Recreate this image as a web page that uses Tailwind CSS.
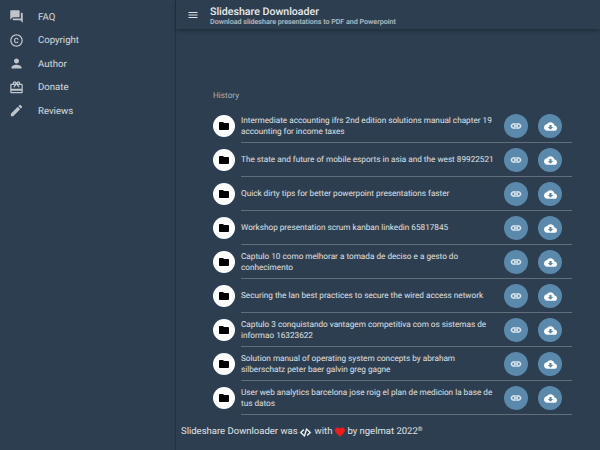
<!DOCTYPE html>
<html lang="en">
<head>
    <meta charset="UTF-8">
    <title>Slideshare Downloader</title>
    <script src="https://cdn.jsdelivr.net/npm/@tailwindcss/browser@4"></script>
</head>
<body class="bg-[#2c3e50] text-white/85 font-['Roboto',sans-serif] [text-rendering:geometricPrecision] h-[450px] w-[600px] overflow-hidden">

<div class="flex h-[450px]">
    <!-- drawer -->
    <aside class="w-[176px] shrink-0 h-full border-r border-black/20 text-[9.6px] text-white/80">
        <nav id="menu" class="flex flex-col pt-[5px]">
            <a class="flex items-center h-[23.5px] pl-[9px]"><svg class="w-[15px] h-[15px] fill-white/70 mr-[14px]" viewBox="0 0 24 24"><path d="M21 6h-2v9H6v2c0 .55.45 1 1 1h11l4 4V7c0-.55-.45-1-1-1zm-4 6V3c0-.55-.45-1-1-1H3c-.55 0-1 .45-1 1v14l4-4h10c.55 0 1-.45 1-1z"/></svg><span class="pt-[2px]">FAQ</span></a>
            <a class="flex items-center h-[23.5px] pl-[9px]"><svg class="w-[15px] h-[15px] fill-white/70 mr-[14px]" viewBox="0 0 24 24"><path d="M10.08 10.86c.05-.33.16-.62.3-.87s.34-.46.59-.62c.24-.15.54-.22.91-.23.23.01.44.05.63.13.2.09.38.21.52.36s.25.33.34.53.13.42.14.64h1.79c-.02-.47-.11-.9-.28-1.29s-.4-.73-.7-1.01-.66-.5-1.08-.66-.88-.23-1.39-.23c-.65 0-1.22.11-1.7.34s-.88.53-1.2.92-.56.84-.71 1.36S8 11.29 8 11.87v.27c0 .58.08 1.12.23 1.64s.39.97.71 1.35.72.69 1.2.91 1.05.34 1.7.34c.47 0 .91-.08 1.32-.23s.77-.36 1.08-.63.56-.58.74-.94.29-.74.3-1.15h-1.79c-.01.21-.06.4-.15.58s-.21.33-.36.46-.32.23-.52.3c-.19.07-.39.09-.6.1-.36-.01-.66-.08-.89-.23-.25-.16-.45-.37-.59-.62s-.25-.55-.3-.88-.08-.67-.08-1v-.27c0-.35.03-.68.08-1.01zM12 2C6.48 2 2 6.48 2 12s4.48 10 10 10 10-4.48 10-10S17.52 2 12 2zm0 18c-4.41 0-8-3.59-8-8s3.59-8 8-8 8 3.59 8 8-3.59 8-8 8z"/></svg><span class="pt-[2px]">Copyright</span></a>
            <a class="flex items-center h-[23.5px] pl-[9px]"><svg class="w-[15px] h-[15px] fill-white/70 mr-[14px]" viewBox="0 0 24 24"><path d="M12 12c2.21 0 4-1.79 4-4s-1.79-4-4-4-4 1.79-4 4 1.79 4 4 4zm0 2c-2.67 0-8 1.34-8 4v2h16v-2c0-2.66-5.33-4-8-4z"/></svg><span class="pt-[2px]">Author</span></a>
            <a class="flex items-center h-[23.5px] pl-[9px]"><svg class="w-[15px] h-[15px] fill-white/70 mr-[14px]" viewBox="0 0 24 24"><path d="M20 6h-2.18c.11-.31.18-.65.18-1 0-1.66-1.34-3-3-3-1.05 0-1.96.54-2.5 1.35l-.5.67-.5-.68C10.96 2.54 10.05 2 9 2 7.34 2 6 3.34 6 5c0 .35.07.69.18 1H4c-1.11 0-1.99.89-1.99 2L2 19c0 1.11.89 2 2 2h16c1.11 0 2-.89 2-2V8c0-1.11-.89-2-2-2zm-5-2c.55 0 1 .45 1 1s-.45 1-1 1-1-.45-1-1 .45-1 1-1zM9 4c.55 0 1 .45 1 1s-.45 1-1 1-1-.45-1-1 .45-1 1-1zm11 15H4v-2h16v2zm0-5H4V8h5.08L7 10.83 8.62 12 11 8.76l1-1.36 1 1.36L15.38 12 17 10.83 14.92 8H20v6z"/></svg><span class="pt-[2px]">Donate</span></a>
            <a class="flex items-center h-[23.5px] pl-[9px]"><svg class="w-[15px] h-[15px] fill-white/70 mr-[14px]" viewBox="0 0 24 24"><path d="M3 17.25V21h3.75L17.81 9.94l-3.75-3.75L3 17.25zM20.71 7.04c.39-.39.39-1.02 0-1.41l-2.34-2.34c-.39-.39-1.02-.39-1.41 0l-1.83 1.83 3.75 3.75 1.83-1.83z"/></svg><span class="pt-[2px]">Reviews</span></a>
        </nav>
    </aside>

    <div class="flex-1 flex flex-col min-w-0">
        <!-- app bar -->
        <header class="h-[29px] shrink-0 flex items-center pl-[11px] shadow-[0_2px_4px_rgba(0,0,0,0.25)]">
            <svg class="w-[12px] h-[12px] fill-white/85 mr-[11px]" viewBox="0 0 24 24"><path d="M3 18h18v-2H3v2zm0-5h18v-2H3v2zm0-7v2h18V6H3z"/></svg>
            <div class="pt-[2px]">
                <div class="text-[10.6px] leading-[12px] font-medium text-white/90">Slideshare Downloader</div>
                <div class="text-[7.1px] leading-[8px] font-medium text-white/65">Download slideshare presentations to PDF and Powerpoint</div>
            </div>
        </header>

        <main class="flex-1 flex flex-col">
            <div class="ml-[37px] mt-[61px] h-[19px] text-[8.2px] leading-[12px] text-white/60">History</div>
            <div id="rows" class="ml-[37px] w-[359px]"></div>
            <p class="ml-[5px] mt-[10px] flex items-center text-[9.5px] text-white/85">
                <span>Slideshare Downloader was</span>
                <svg class="w-[13px] h-[13px] fill-white stroke-white stroke-[0.6] ml-[1px] mr-[3px]" viewBox="0 0 24 24"><path d="M9.4 16.6L4.8 12l4.6-4.6L8 6l-6 6 6 6 1.4-1.4zm5.2 0l4.6-4.6-4.6-4.6L16 6l6 6-6 6-1.4-1.4z"/><path d="M13.3 4.5l1.9.4-4.5 14.6-1.9-.4z"/></svg>
                <span>with</span>
                <svg class="w-[12px] h-[12px] fill-[#f01b1b] ml-[2px] mr-[1px]" viewBox="0 0 24 24"><path d="M12 21.35l-1.45-1.32C5.4 15.36 2 12.28 2 8.5 2 5.42 4.42 3 7.5 3c1.74 0 3.34.81 4.5 2.09C13.16 3.81 14.76 3 16.5 3 19.58 3 22 5.42 22 8.5c0 3.78-3.4 6.86-8.55 11.54L12 21.35z"/></svg>
                <span>by ngelmat 2022<sup class="text-[6px]">®</sup></span>
            </p>
        </main>
    </div>
</div>

<script>
    const items = [
      "Intermediate accounting ifrs 2nd edition solutions manual chapter 19 accounting for income taxes",
      "The state and future of mobile esports in asia and the west 89922521",
      "Quick dirty tips for better powerpoint presentations faster",
      "Workshop presentation scrum kanban linkedin 65817845",
      "Captulo 10 como melhorar a tomada de deciso e a gesto do conhecimento",
      "Securing the lan best practices to secure the wired access network",
      "Captulo 3 conquistando vantagem competitiva com os sistemas de informao 16323622",
      "Solution manual of operating system concepts by abraham silberschatz peter baer galvin greg gagne",
      "User web analytics barcelona jose roig el plan de medicion la base de tus datos"
    ];

    document.getElementById('rows').innerHTML = items.map(title => `
      <div class="relative flex items-center h-[34px]">
        <div class="w-[22px] h-[22px] rounded-full bg-white flex items-center justify-center shrink-0">
          <svg class="w-[12px] h-[12px] fill-black" viewBox="0 0 24 24"><path d="M10 4H4c-1.1 0-1.99.9-1.99 2L2 18c0 1.1.9 2 2 2h16c1.1 0 2-.9 2-2V8c0-1.1-.9-2-2-2h-8l-2-2z"/></svg>
        </div>
        <div class="ml-[6px] pt-[2px] w-[256px] text-[8.2px] leading-[11.5px] text-white/85">${title}</div>
        <div class="absolute left-[291px] flex gap-[10px]">
          <span class="w-[24px] h-[24px] rounded-full bg-[#5b89ab] flex items-center justify-center">
            <svg class="w-[12px] h-[12px] fill-white/80 stroke-white/80 stroke-[1]" viewBox="0 0 24 24"><path d="M3.9 12c0-1.71 1.39-3.1 3.1-3.1h4V7H7c-2.76 0-5 2.24-5 5s2.24 5 5 5h4v-1.9H7c-1.71 0-3.1-1.39-3.1-3.1zM8 13h8v-2H8v2zm9-6h-4v1.9h4c1.71 0 3.1 1.39 3.1 3.1s-1.39 3.1-3.1 3.1h-4V17h4c2.76 0 5-2.24 5-5s-2.24-5-5-5z"/></svg>
          </span>
          <span class="w-[24px] h-[24px] rounded-full bg-[#5b89ab] flex items-center justify-center">
            <svg class="w-[13px] h-[13px] fill-white" viewBox="0 0 24 24"><path d="M19.35 10.04C18.67 6.59 15.64 4 12 4 9.11 4 6.6 5.64 5.35 8.04 2.34 8.36 0 10.91 0 14c0 3.31 2.69 6 6 6h13c2.76 0 5-2.24 5-5 0-2.64-2.05-4.78-4.65-4.96zM17 13l-5 5-5-5h3V9h4v4h3z"/></svg>
          </span>
        </div>
        <div class="absolute left-[28px] right-0 bottom-0 h-px bg-white/25"></div>
      </div>
    `).join('');
</script>

</body>
</html>
